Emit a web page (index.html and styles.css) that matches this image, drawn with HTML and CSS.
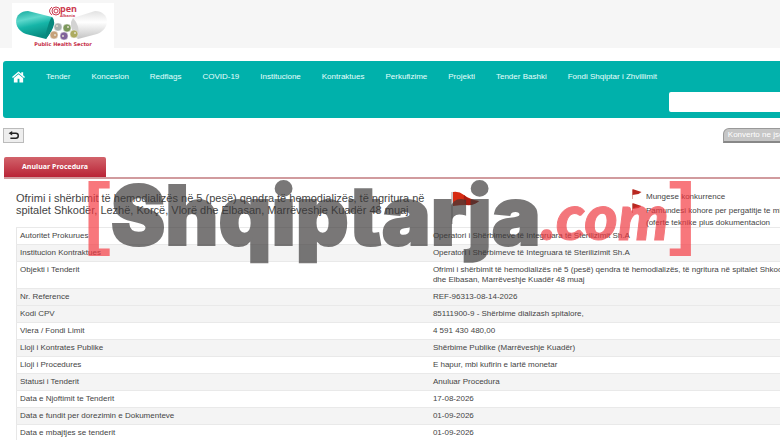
FILE: index.html
```html
<!DOCTYPE html>
<html lang="sq">
<head>
<meta charset="utf-8">
<title>Open Albania - Public Health Sector</title>
<link rel="stylesheet" href="styles.css">
</head>
<body>
<div class="page">
  <header class="brand">
    <a class="logo" href="#" aria-label="Public Health Sector">
      <svg class="capsule" viewBox="0 0 102 38" aria-hidden="true">
        <defs>
          <linearGradient id="teal" x1="0" y1="0" x2="0.3" y2="1"><stop offset="0" stop-color="#12a99c"/><stop offset=".35" stop-color="#5ed8cc"/><stop offset=".6" stop-color="#16b5a8"/><stop offset="1" stop-color="#078b80"/></linearGradient>
          <linearGradient id="pearl" x1="0" y1="0" x2="0" y2="1"><stop offset="0" stop-color="#e2e2e2"/><stop offset=".4" stop-color="#fff"/><stop offset="1" stop-color="#c4c4c4"/></linearGradient>
        </defs>
        <path d="M16 8 40 14Q44 19 38 30L34 36 14 31C0 26 1 8 16 8Z" fill="url(#teal)"/>
        <path d="M40 14Q45 18 39 29L34 36Q33 31 36 23Q38 16 40 14Z" fill="#07877d"/>
        <path d="M61 15 83 8C98 8 99 26 85 31L66 36Q59 29 59 21Q59 17 61 15Z" fill="url(#pearl)"/>
        <path d="M61 15Q69 23 66 36Q58 27 59 19Z" fill="#d3d3d3"/>
        <g stroke="#eee" stroke-width=".5">
          <circle cx="46" cy="24" r="4" fill="#a9b0ae"/><circle cx="55" cy="25" r="4" fill="#7c985b"/>
          <circle cx="42" cy="32" r="4" fill="#c6a27a"/><circle cx="52" cy="33" r="4" fill="#81649b"/><circle cx="62" cy="31" r="4" fill="#adab60"/>
        </g>
        <g fill="#e5dfd0"><circle cx="45" cy="23" r="1"/><circle cx="56" cy="24" r="1"/><circle cx="43" cy="32" r="1"/><circle cx="51" cy="33" r="1"/><circle cx="63" cy="30" r="1"/></g>
        <g fill="none" stroke="#cc3b50" stroke-width="1"><circle cx="44" cy="8" r="4"/><circle cx="44" cy="8" r="2"/><path d="M40 4Q35 8 40 12"/></g>
        <text x="48" y="9" class="logo-name">pen</text>
        <text x="48" y="14" class="logo-country">Albania</text>
      </svg>
      <span class="tagline">Public Health Sector</span>
    </a>
  </header>

  <nav class="menu">
    <div class="links">
      <a class="home" href="#" aria-label="Home"><svg viewBox="0 0 14 12"><path d="M0 6 7 0 10 2.500V1H12V4.200L14 6 13 7 7 2 1 7Z"/><path d="M2 7 7 3 12 7V12H8V8H6V12H2Z"/></svg></a>
      <a href="#">Tender</a><a href="#">Koncesion</a><a href="#">Redflags</a><a href="#">COVID-19</a><a href="#">Institucione</a><a href="#">Kontraktues</a><a href="#">Perkufizime</a><a href="#">Projekti</a><a href="#">Tender Bashki</a><a href="#">Fondi Shqiptar i Zhvillimit</a>
    </div>
    <input class="search" type="text" aria-label="Search">
  </nav>

  <div class="actions">
    <button class="back" aria-label="Back"><svg viewBox="0 0 12 10"><path d="M2 2.500H8A2.500 2.500 0 0 1 8 8H2" fill="none" stroke="#222" stroke-width="1.600"/><path d="M0 2.500 4 0V5Z" fill="#222"/></svg></button>
    <button class="convert">Konverto ne json format</button>
  </div>

  <div class="tabs"><button class="tab">Anuluar Procedura</button></div>

  <main class="tender">
    <section class="summary">
      <h1>Ofrimi i shërbimit të hemodializës në 5 (pesë) qendra të hemodializës, të ngritura në spitalet Shkodër, Lezhë, Korçë, Vlorë dhe Elbasan, Marrëveshje Kuadër 48 muaj</h1>
      <svg class="flag" viewBox="0 0 30 34"><path d="M1 1V33" stroke="#999" stroke-width="1"/><path d="M2 1Q8 0 13 4T28 10Q24 14 16 14T2 15Z" fill="#d62b12"/><path d="M13 4Q12 9 15 14Q23 15 28 10Q19 10 13 4Z" fill="#a91c10"/></svg>
      <ul class="warnings">
        <li><svg viewBox="0 0 10 10"><path d="M1 1V10" stroke="#d9aaa5"/><path d="M1 0 10 3 7 5 1 6Z" fill="#b92820"/></svg>Mungese konkurrence</li>
        <li><svg viewBox="0 0 10 10"><path d="M1 1V10" stroke="#d9aaa5"/><path d="M1 0 10 3 7 5 1 6Z" fill="#b92820"/></svg>Pamundesi kohore per pergatitje te mire<br>(oferte teknike plus dokumentacion</li>
      </ul>
    </section>
    <table class="details">
      <tr><th scope="row">Autoritet Prokurues</th><td>Operatori i Shërbimeve të Integruara të Sterilizimit Sh.A</td></tr>
      <tr class="shaded"><th scope="row">Institucion Kontraktues</th><td>Operatori i Shërbimeve të Integruara të Sterilizimit Sh.A</td></tr>
      <tr><th scope="row">Objekti i Tenderit</th><td>Ofrimi i shërbimit të hemodializës në 5 (pesë) qendra të hemodializës, të ngritura në spitalet Shkodër, Lezhë, Korçë, Vlorë<br>dhe Elbasan, Marrëveshje Kuadër 48 muaj</td></tr>
      <tr class="shaded"><th scope="row">Nr. Reference</th><td>REF-96313-08-14-2026</td></tr>
      <tr class="shaded"><th scope="row">Kodi CPV</th><td>85111900-9 - Shërbime dializash spitalore,</td></tr>
      <tr><th scope="row">Vlera / Fondi Limit</th><td>4 591 430 480,00</td></tr>
      <tr class="shaded"><th scope="row">Lloji i Kontrates Publike</th><td>Shërbime Publike (Marrëveshje Kuadër)</td></tr>
      <tr><th scope="row">Lloji i Procedures</th><td>E hapur, mbi kufirin e lartë monetar</td></tr>
      <tr class="shaded"><th scope="row">Statusi i Tenderit</th><td>Anuluar Procedura</td></tr>
      <tr><th scope="row">Data e Njoftimit te Tenderit</th><td>17-08-2026</td></tr>
      <tr class="shaded"><th scope="row">Data e fundit per dorezimin e Dokumenteve</th><td>01-09-2026</td></tr>
      <tr><th scope="row">Data e mbajtjes se tenderit</th><td>01-09-2026</td></tr>
    </table>
  </main>
</div>
<div class="watermark"><span class="bracket">[</span><span class="site">Shqiptarja</span><span class="domain">.com</span><span class="bracket">]</span></div>
</body>
</html>
```
FILE: styles.css
```css
* { box-sizing: border-box; }
html { overflow: hidden; }
body { position: relative; margin: 0; overflow: hidden; background: #fff; color: #444; font: 8px/10px "Liberation Sans", sans-serif; }
a { color: inherit; text-decoration: none; }
button { font: inherit; }
.page { width: 111%; }

.brand { height: 48px; padding: 3px 12px 0; background: #f6f6f6; }
.logo { display: flex; flex-direction: column; align-items: center; width: 102px; height: 45px; background: #fff; }
.capsule { width: 102px; height: 38px; }
.logo-name { font: bold 9px "Open Sans", sans-serif; fill: #cc3b50; }
.logo-country { font: bold 4px "Open Sans", sans-serif; fill: #cc3b50; }
.tagline { color: #c52a44; font: bold 5px/6px "DejaVu Sans", sans-serif; }

.menu { display: flex; flex-direction: column; height: 57px; margin: 13px 3px 0; padding: 9px 0 5px 9px; background: #00b1ab; border-radius: 3px; color: #e8fffd; }
.links { display: flex; align-items: center; gap: 21px; height: 14px; }
.home svg { display: block; width: 13px; height: 12px; fill: #fff; }
.search { width: 180px; height: 20px; margin: 8px 14px 0 auto; border: 0; border-radius: 2px; background: #fff; }

.actions { display: flex; justify-content: space-between; margin: 10px 3px 0; }
.back { width: 21px; height: 15px; padding: 0; border: 1px solid #bbb; background: #eee; }
.back svg { display: block; width: 12px; height: 9px; margin: auto; }
.convert { width: 140px; height: 15px; padding: 0 4px; border: 1px solid #999; border-bottom: 2px solid #888; border-radius: 6px 0 0 0; background: #c6c6c6; color: #fff; text-align: left; }

.tabs { display: flex; margin: 14px 4px 0; border-bottom: 2px solid #d19b9e; }
.tab { height: 20px; padding: 0 18px; border: 0; border-radius: 2px 2px 0 0; background: linear-gradient(#d2636b, #b92336); color: #fff; font: bold 7px/10px "Open Sans", sans-serif; }

.tender { padding: 12px 16px 0; }
.summary { display: grid; grid-template-columns: 435px 180px 1fr; height: 36px; }
h1 { width: 425px; margin: 1px 0 0; font-size: 11px; line-height: 12px; font-weight: normal; }
.flag { width: 30px; height: 34px; }
.warnings { margin: 0; padding: 0; list-style: none; font-size: 8px; line-height: 12px; white-space: nowrap; }
.warnings li { position: relative; padding-left: 15px; margin-bottom: 2px; }
.warnings svg { position: absolute; left: 0; top: -2px; width: 11px; height: 10px; }

.details { width: 100%; table-layout: fixed; border-collapse: collapse; border: 1px solid #e7e7e7; }
.details th, .details td { width: 50%; padding: 3px 0; border-top: 1px solid #e9e9e9; text-align: left; vertical-align: top; font-weight: normal; line-height: 10px; }
.details th { padding-left: 3px; }
.details td { white-space: nowrap; }
.shaded { background: #f4f4f4; }

.watermark { position: absolute; left: 84px; top: 164px; display: flex; white-space: nowrap; opacity: .68; }
.bracket { color: #f5373f; font: bold 80px/96px "Liberation Sans", sans-serif; }
.site { padding-top: 4px; color: #3a3838; font: 900 82px/96px Inter, sans-serif; -webkit-text-stroke: 2px #3a3838; }
.domain { padding-top: 4px; color: #ee363e; font: italic 900 64px/96px Lato, sans-serif; -webkit-text-stroke: 1px #ee363e; }
```
